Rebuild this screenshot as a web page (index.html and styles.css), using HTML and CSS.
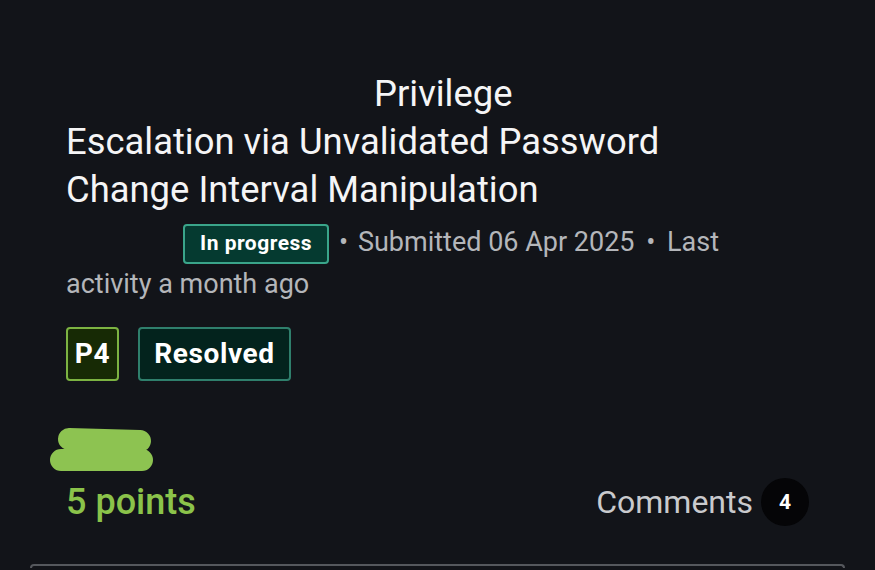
FILE: index.html
```html
<!DOCTYPE html>
<html lang="en">

<head>
    <meta charset="UTF-8">
    <meta name="viewport" content="width=device-width, initial-scale=1.0">
    <title>Report</title>
    <link rel="stylesheet" href="styles.css">
</head>

<body>
    <div class="report">
        <h1 class="title">
            <span class="line first">Privilege</span>
            <span class="line">Escalation via Unvalidated Password</span>
            <span class="line">Change Interval Manipulation</span>
        </h1>
        <div class="meta">
            <div class="meta-row">
                <span class="status">In progress</span>
                <span class="info"><span class="dot">•</span> Submitted 06 Apr 2025 <span class="dot last">•</span> Last</span>
            </div>
            <div class="meta-line">activity a month ago</div>
        </div>
        <div class="tags">
            <span class="tag priority">P4</span>
            <span class="tag state">Resolved</span>
        </div>
        <svg class="scribble" width="110" height="46" viewBox="0 0 110 46">
            <path d="M21 12 L92 14 M13 33 L94 33" stroke="#8dc351" stroke-width="22" stroke-linecap="round" fill="none" />
        </svg>
        <div class="footer">
            <span class="points">5 points</span>
            <span class="comments">Comments <span class="count">4</span></span>
        </div>
        <div class="card"></div>
    </div>
</body>

</html>
```

FILE: styles.css
```css
* {
    box-sizing: border-box;
}

body {
    background: #121419;
    font-family: Roboto, "Liberation Sans", Arial, sans-serif;
    margin: 0;
    color: #fff;
    overflow: hidden;
}

.report {
    padding: 70px 0 0 66px;
    width: 845px;
}

.title {
    font-size: 36.4px;
    font-weight: 400;
    line-height: 48px;
    margin: 0;
    color: #f5f5f6;
}

.line {
    display: block;
}

.first {
    padding-left: 308px;
}

.meta {
    margin-top: 7px;
    font-size: 27px;
    line-height: 42px;
    color: #b4b6ba;
}

.meta-row {
    display: flex;
    align-items: flex-start;
    height: 42px;
    padding-left: 117px;
}

.info {
    margin-left: 10px;
}

.dot {
    margin-right: 3px;
}

.dot.last {
    margin: 0 5px;
}

.status {
    height: 40px;
    margin-top: 3px;
    line-height: 35px;
    padding: 0 15px;
    border: 2px solid #3aa58a;
    border-radius: 4px;
    background: #053a30;
    color: #fff;
    font-size: 21px;
    font-weight: 700;
    letter-spacing: 0.5px;
}

.tags {
    display: flex;
    gap: 19px;
    margin-top: 22px;
}

.tag {
    height: 54px;
    line-height: 50px;
    border-radius: 4px;
    border: 2px solid;
    font-size: 28px;
    font-weight: 700;
    letter-spacing: 0.6px;
    text-align: center;
}

.priority {
    width: 53px;
    background: #172a05;
    border-color: #7cb342;
}

.state {
    width: 153px;
    background: #03231d;
    border-color: #2f7f6c;
}

.scribble {
    display: block;
    margin: 46px 0 0 -18px;
}

.footer {
    display: flex;
    justify-content: space-between;
    align-items: center;
    margin-top: 5px;
    padding-right: 36px;
}

.points {
    font-size: 36px;
    font-weight: 500;
    color: #8bc34a;
}

.comments {
    display: flex;
    align-items: center;
    gap: 8px;
    font-size: 32px;
    color: #c9cacd;
}

.count {
    width: 48px;
    height: 48px;
    border-radius: 50%;
    background: #050507;
    color: #fff;
    font-size: 21px;
    font-weight: 700;
    display: flex;
    align-items: center;
    justify-content: center;
}

.card {
    margin: 38px 0 0 -36px;
    width: 815px;
    height: 4px;
    border: 2px solid #55585d;
    border-bottom: none;
    border-radius: 8px 8px 0 0;
}
```
